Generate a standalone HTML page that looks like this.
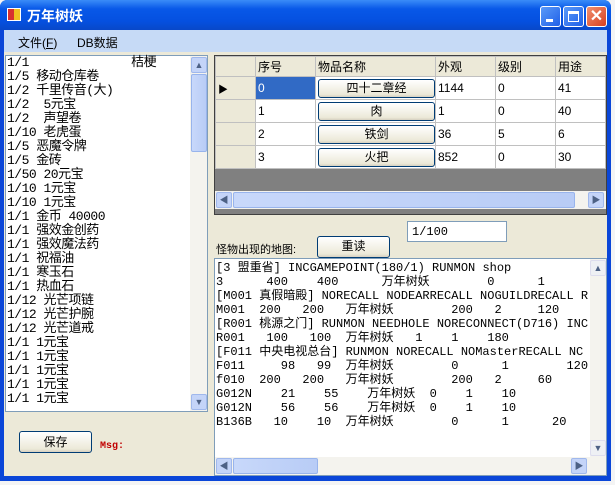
<!DOCTYPE html>
<html><head><meta charset="utf-8"><style>
*{margin:0;padding:0;box-sizing:border-box}
body{width:615px;height:485px;overflow:hidden;background:#f4f4f4;position:relative;font-family:"Liberation Sans","Noto Sans CJK SC",sans-serif;font-size:12px}
.a{position:absolute}
.win{left:0;top:0;width:611px;height:481px;background:#0a46d8;border-radius:7px 7px 0 0}
.title{left:0;top:0;width:611px;height:30px;border-radius:7px 7px 0 0;background:linear-gradient(#3a8cf8,#0858e8 30%,#0550e0 70%,#0848c8)}
.tb{top:6px;width:21px;height:21px;border:1px solid #fff;border-radius:3px;background:linear-gradient(135deg,#5a9af8,#2060e8)}
.client{left:4px;top:30px;width:603px;height:446px;background:#ece9d8}
.menu{left:4px;top:30px;width:603px;height:22px;background:#c6daf6}
.mono{font-family:"Liberation Mono","Noto Sans CJK SC",monospace}
.btn{background:linear-gradient(#fff,#ece9d8 85%,#d6d0c0);border:1px solid #003c74;border-radius:3px;text-align:center}
.sb{background:#f4f3ee}
.thumb{background:linear-gradient(90deg,#c8d8fa,#b8ccf6);border:1px solid #98b4ec;border-radius:2px}
.arr{width:16px;height:16px;background:#c4d4f8;border:1px solid #a0b8ec;border-radius:2px;color:#4d6185;font-size:9px;text-align:center;line-height:14px}
table{border-collapse:collapse}
td{border:1px solid #c0c0c0;height:23px;padding-left:2px;font-size:12px}
</style></head><body>
<div class="a win"></div>
<div class="a title"></div>
<div class="a" style="left:7px;top:8px;width:14px;height:13px;background:linear-gradient(90deg,#d83030 50%,#f0c020 50%);border:1px solid #fff"></div>
<div class="a" style="left:27px;top:6px;color:#fff;font-weight:bold;font-size:14px;font-family:'Noto Sans CJK SC',sans-serif">万年树妖</div>
<div class="a tb" style="left:540px"><div class="a" style="left:5px;top:12px;width:7px;height:3px;background:#fff"></div></div>
<div class="a tb" style="left:563px"><div class="a" style="left:4px;top:4px;width:11px;height:11px;border:1px solid #fff;border-top-width:3px"></div></div>
<div class="a tb" style="left:586px;background:linear-gradient(135deg,#f09070,#d84020);color:#fff;font-size:16px;font-weight:bold;text-align:center;line-height:19px">✕</div>
<div class="a client"></div>
<div class="a menu"></div>
<div class="a" style="left:18px;top:34px;font-size:12px">文件(<u>F</u>)</div>
<div class="a" style="left:77px;top:34px;font-size:12px">DB数据</div>

<!-- left list -->
<div class="a" style="left:5px;top:55px;width:203px;height:357px;background:#fff;border:1px solid #7f9db9"></div>
<pre class="a mono" style="left:7px;top:56px;font-size:13px;line-height:14px;letter-spacing:-0.5px">1/1              桔梗
1/5 移动仓库卷
1/2 千里传音(大)
1/2  5元宝
1/2  声望卷
1/10 老虎蛋
1/5 恶魔令牌
1/5 金砖
1/50 20元宝
1/10 1元宝
1/10 1元宝
1/1 金币 40000
1/1 强效金创药
1/1 强效魔法药
1/1 祝福油
1/1 寒玉石
1/1 热血石
1/12 光芒项链
1/12 光芒护腕
1/12 光芒道戒
1/1 1元宝
1/1 1元宝
1/1 1元宝
1/1 1元宝
1/1 1元宝</pre>
<div class="a sb" style="left:190px;top:56px;width:17px;height:355px"></div>
<div class="a arr" style="left:191px;top:57px">▲</div>
<div class="a thumb" style="left:191px;top:74px;width:16px;height:78px"></div>
<div class="a arr" style="left:191px;top:394px">▼</div>
<div class="a btn" style="left:19px;top:431px;width:73px;height:22px;line-height:20px">保存</div>
<div class="a mono" style="left:100px;top:441px;color:#c00000;font-size:10px;font-weight:bold">Msg:</div>

<!-- grid -->
<div class="a" style="left:214px;top:55px;width:393px;height:160px;background:#808080;border:1px solid #404040"></div>
<table class="a" style="left:215px;top:56px;background:#fff">
<tr style="background:#ece9d8"><td style="width:40px;height:20px"></td><td style="width:60px;height:20px">序号</td><td style="width:120px;height:20px">物品名称</td><td style="width:60px;height:20px">外观</td><td style="width:60px;height:20px">级别</td><td style="width:50px;height:20px">用途</td></tr>
<tr><td style="background:#ece9d8;font-size:10px">▶</td><td style="background:#316ac5;color:#fff">0</td><td><div class="btn" style="height:19px;line-height:17px">四十二章经</div></td><td>1144</td><td>0</td><td>41</td></tr>
<tr><td style="background:#ece9d8"></td><td>1</td><td><div class="btn" style="height:19px;line-height:17px">肉</div></td><td>1</td><td>0</td><td>40</td></tr>
<tr><td style="background:#ece9d8"></td><td>2</td><td><div class="btn" style="height:19px;line-height:17px">铁剑</div></td><td>36</td><td>5</td><td>6</td></tr>
<tr><td style="background:#ece9d8"></td><td>3</td><td><div class="btn" style="height:19px;line-height:17px">火把</div></td><td>852</td><td>0</td><td>30</td></tr>
</table>
<div class="a sb" style="left:215px;top:191px;width:391px;height:18px"></div>
<div class="a arr" style="left:216px;top:192px">◀</div>
<div class="a thumb" style="left:233px;top:192px;width:342px;height:16px"></div>
<div class="a arr" style="left:588px;top:192px">▶</div>

<!-- lower -->
<div class="a" style="left:407px;top:221px;width:100px;height:21px;background:#fff;border:1px solid #7f9db9;padding:2px 4px" ><span class="mono" style="font-size:12px">1/100</span></div>
<div class="a" style="left:216px;top:241px;font-size:11px">怪物出现的地图:</div>
<div class="a btn" style="left:317px;top:236px;width:73px;height:22px;line-height:18px">重读</div>
<div class="a" style="left:214px;top:258px;width:393px;height:218px;background:#fff;border:1px solid #7f9db9"></div>
<div class="a" style="left:216px;top:261px;width:374px;height:195px;overflow:hidden">
<pre class="mono" style="font-size:12px;line-height:14px">[3 盟重省] INCGAMEPOINT(180/1) RUNMON shop
3      400    400      万年树妖        0      1
[M001 真假暗殿] NORECALL NODEARRECALL NOGUILDRECALL R
M001  200   200   万年树妖        200   2     120
[R001 桃源之门] RUNMON NEEDHOLE NORECONNECT(D716) INC
R001   100   100  万年树妖   1    1    180
[F011 中央电视总台] RUNMON NORECALL NOMasterRECALL NC
F011     98   99  万年树妖        0      1        120
f010  200   200   万年树妖        200   2     60
G012N    21    55    万年树妖  0    1    10
G012N    56    56    万年树妖  0    1    10
B136B   10    10  万年树妖        0      1      20</pre></div>
<div class="a sb" style="left:590px;top:259px;width:16px;height:198px"></div>
<div class="a arr" style="left:590px;top:260px;background:#eef0f4;border-color:#dde">▲</div>
<div class="a arr" style="left:590px;top:440px;background:#eef0f4;border-color:#dde">▼</div>
<div class="a sb" style="left:215px;top:457px;width:391px;height:18px"></div>
<div class="a arr" style="left:216px;top:458px">◀</div>
<div class="a thumb" style="left:233px;top:458px;width:85px;height:16px"></div>
<div class="a arr" style="left:571px;top:458px">▶</div>
</body></html>
